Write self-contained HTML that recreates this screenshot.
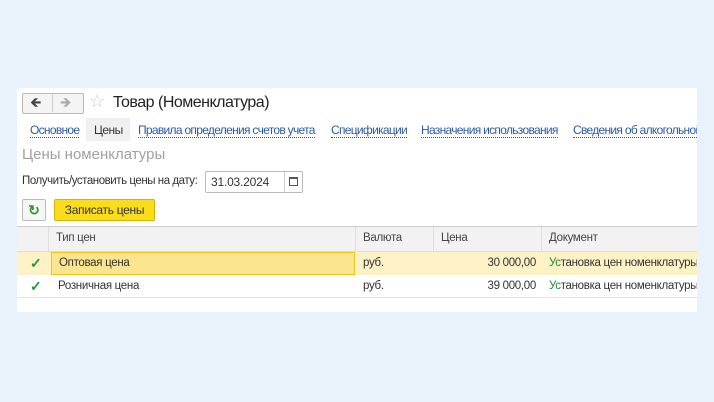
<!DOCTYPE html>
<html><head><meta charset="utf-8"><style>
body{margin:0;width:714px;height:402px;background:#e9f2fb;font-family:"Liberation Sans",Arial,sans-serif;position:relative;overflow:hidden}
.p{position:absolute;left:17px;top:88px;width:680px;height:224px;background:#fff;overflow:hidden}
.a{position:absolute;white-space:nowrap}
.lnk{color:#2a5aa6;font-size:12px;letter-spacing:-0.7px;border-bottom:1px dotted #2a5aa6;line-height:14px}
.row{position:absolute;left:0;width:680px;font-size:11.5px;color:#333;letter-spacing:-0.3px}
.c{position:absolute;top:0;height:100%;line-height:23px;box-sizing:border-box;padding-left:7px}
</style></head><body>
<div class="p">
 <div class="a" style="left:5px;top:5px;width:60px;height:19px;border:1px solid #bbb;border-radius:2px;background:#f4f4f4"></div>
 <div class="a" style="left:35px;top:6px;width:1px;height:18px;background:#ccc"></div>
 <div class="a" style="left:13px;top:5px;font-size:14px;color:#444;line-height:19px">&#129144;</div>
 <div class="a" style="left:43px;top:5px;font-size:14px;color:#aaa;line-height:19px">&#129146;</div>
 <div class="a" style="left:72px;top:3px;font-size:18px;color:#ccc">☆</div>
 <div class="a" style="left:96px;top:6px;font-size:16px;color:#222;letter-spacing:-0.5px">Товар (Номенклатура)</div>
 <div class="a lnk" style="left:13px;top:35px">Основное</div>
 <div class="a" style="left:69px;top:30px;width:44px;height:23px;background:#f0f0f0"></div>
 <div class="a" style="left:77px;top:35px;font-size:12px;color:#333;letter-spacing:-0.5px">Цены</div>
 <div class="a lnk" style="left:121px;top:35px">Правила определения счетов учета</div>
 <div class="a lnk" style="left:314px;top:35px">Спецификации</div>
 <div class="a lnk" style="left:404px;top:35px">Назначения использования</div>
 <div class="a lnk" style="left:556px;top:35px">Сведения об алкогольной</div>
 <div class="a" style="left:5px;top:58px;font-size:15px;color:#a0a0a0">Цены номенклатуры</div>
 <div class="a" style="left:5px;top:87px;font-size:11.5px;color:#333;letter-spacing:-0.45px">Получить/установить цены на дату:</div>
 <div class="a" style="left:188px;top:83px;width:96px;height:20px;border:1px solid #bbb;border-radius:2px"></div>
 <div class="a" style="left:194px;top:87px;font-size:12px;color:#333;letter-spacing:-0.2px">31.03.2024</div>
 <div class="a" style="left:267px;top:84px;width:1px;height:20px;background:#ccc"></div>
 <div class="a" style="left:272px;top:89px;width:7px;height:6px;border:1px solid #555;border-top-width:2px"></div>
 <div class="a" style="left:5px;top:111px;width:22px;height:20px;border:1px solid #bbb;border-radius:2px;background:#f6f6f6;color:#2a9a2a;font-size:14px;text-align:center;line-height:20px;font-weight:bold">↻</div>
 <div class="a" style="left:37px;top:111px;width:99px;height:20px;border:1px solid #d4b400;border-radius:2px;background:#f9dc1b;font-size:12px;color:#333;text-align:center;line-height:20px;letter-spacing:-0.3px">Записать цены</div>
 <div class="a" style="left:0;top:138px;width:680px;height:1px;background:#ccc"></div>
 <div class="row" style="top:139px;height:24px;background:#f2f2f2;border-bottom:1px solid #ddd;color:#444">
  <div class="c" style="left:0;width:32px;border-right:1px solid #ddd"></div>
  <div class="c" style="left:32px;width:307px;border-right:1px solid #ddd">Тип цен</div>
  <div class="c" style="left:339px;width:78px;border-right:1px solid #ddd">Валюта</div>
  <div class="c" style="left:417px;width:108px;border-right:1px solid #ddd">Цена</div>
  <div class="c" style="left:525px;width:200px">Документ</div>
 </div>
 <div class="row" style="top:164px;height:23px;background:#fdf1c6">
  <div class="c" style="left:0;width:32px;color:#1e9a3a;font-size:14px;font-weight:bold;padding-left:13px">✓</div>
  <div class="c" style="left:34px;width:304px;background:#fbe58e;border:1px solid #f0c419;line-height:21px">Оптовая цена</div>
  <div class="c" style="left:339px;width:78px">руб.</div>
  <div class="c" style="left:417px;width:108px;text-align:right;padding-right:6px">30 000,00</div>
  <div class="c" style="left:525px;width:200px"><span style="color:#1e8a3a">Ус</span>тановка цен номенклатуры</div>
 </div>
 <div class="row" style="top:187px;height:22px;border-bottom:1px solid #e2e2e2">
  <div class="c" style="left:0;width:32px;color:#1e9a3a;font-size:14px;font-weight:bold;padding-left:13px">✓</div>
  <div class="c" style="left:32px;width:307px;padding-left:9px">Розничная цена</div>
  <div class="c" style="left:339px;width:78px">руб.</div>
  <div class="c" style="left:417px;width:108px;text-align:right;padding-right:6px">39 000,00</div>
  <div class="c" style="left:525px;width:200px"><span style="color:#1e8a3a">Ус</span>тановка цен номенклатуры</div>
 </div>
</div>
</body></html>
